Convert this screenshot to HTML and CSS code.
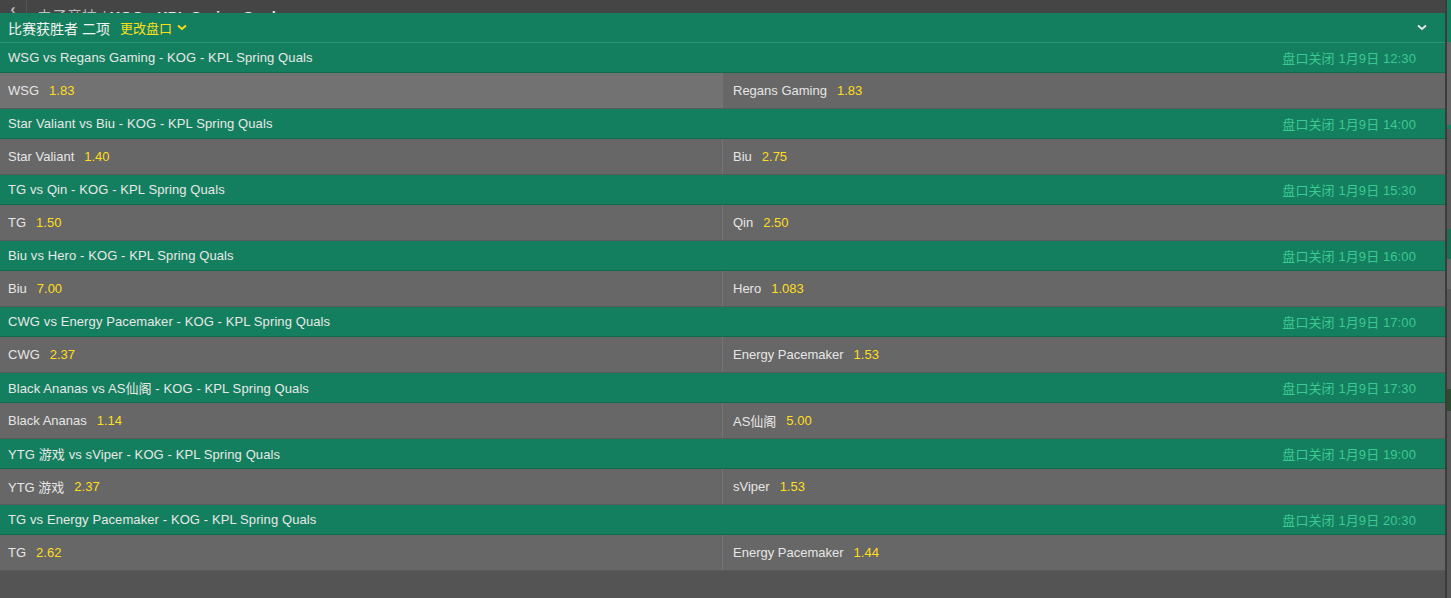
FILE: index.html
```html
<!DOCTYPE html>
<html lang="zh-CN">
<head>
    <meta charset="UTF-8">
    <title>KOG - KPL Spring Quals</title>
    <link rel="stylesheet" href="styles.css">
</head>
<body>
    <div class="page">
        <div class="main">
            <div class="crumb">
                <span class="back">&lsaquo;</span>
                <span class="crumb-text"><span class="crumb-dim">电子竞技 /</span> KOG - KPL Spring Quals</span>
            </div>

            <div class="market-head">
                <span class="market-title">比赛获胜者 二项</span>
                <span class="market-switch">更改盘口
                    <svg width="10" height="7" viewBox="0 0 10 7"><path d="M1 1.5 L5 5 L9 1.5" fill="none" stroke="#ffdf1b" stroke-width="1.8"/></svg>
                </span>
                <svg class="collapse" width="10" height="7" viewBox="0 0 10 7"><path d="M1 1.5 L5 5 L9 1.5" fill="none" stroke="#e8e8e8" stroke-width="1.8"/></svg>
            </div>

            <div class="fixture">
                <div class="fixture-head"><span>WSG vs Regans Gaming - KOG - KPL Spring Quals</span><span class="close">盘口关闭 1月9日 12:30</span></div>
                <div class="odds-row">
                    <div class="cell hover">WSG <span class="price">1.83</span></div>
                    <div class="cell">Regans Gaming <span class="price">1.83</span></div>
                </div>
            </div>

            <div class="fixture">
                <div class="fixture-head"><span>Star Valiant vs Biu - KOG - KPL Spring Quals</span><span class="close">盘口关闭 1月9日 14:00</span></div>
                <div class="odds-row">
                    <div class="cell">Star Valiant <span class="price">1.40</span></div>
                    <div class="cell">Biu <span class="price">2.75</span></div>
                </div>
            </div>

            <div class="fixture">
                <div class="fixture-head"><span>TG vs Qin - KOG - KPL Spring Quals</span><span class="close">盘口关闭 1月9日 15:30</span></div>
                <div class="odds-row">
                    <div class="cell">TG <span class="price">1.50</span></div>
                    <div class="cell">Qin <span class="price">2.50</span></div>
                </div>
            </div>

            <div class="fixture">
                <div class="fixture-head"><span>Biu vs Hero - KOG - KPL Spring Quals</span><span class="close">盘口关闭 1月9日 16:00</span></div>
                <div class="odds-row">
                    <div class="cell">Biu <span class="price">7.00</span></div>
                    <div class="cell">Hero <span class="price">1.083</span></div>
                </div>
            </div>

            <div class="fixture">
                <div class="fixture-head"><span>CWG vs Energy Pacemaker - KOG - KPL Spring Quals</span><span class="close">盘口关闭 1月9日 17:00</span></div>
                <div class="odds-row">
                    <div class="cell">CWG <span class="price">2.37</span></div>
                    <div class="cell">Energy Pacemaker <span class="price">1.53</span></div>
                </div>
            </div>

            <div class="fixture">
                <div class="fixture-head"><span>Black Ananas vs AS仙阁 - KOG - KPL Spring Quals</span><span class="close">盘口关闭 1月9日 17:30</span></div>
                <div class="odds-row">
                    <div class="cell">Black Ananas <span class="price">1.14</span></div>
                    <div class="cell">AS仙阁 <span class="price">5.00</span></div>
                </div>
            </div>

            <div class="fixture">
                <div class="fixture-head"><span>YTG 游戏 vs sViper - KOG - KPL Spring Quals</span><span class="close">盘口关闭 1月9日 19:00</span></div>
                <div class="odds-row">
                    <div class="cell">YTG 游戏 <span class="price">2.37</span></div>
                    <div class="cell">sViper <span class="price">1.53</span></div>
                </div>
            </div>

            <div class="fixture">
                <div class="fixture-head"><span>TG vs Energy Pacemaker - KOG - KPL Spring Quals</span><span class="close">盘口关闭 1月9日 20:30</span></div>
                <div class="odds-row">
                    <div class="cell">TG <span class="price">2.62</span></div>
                    <div class="cell">Energy Pacemaker <span class="price">1.44</span></div>
                </div>
            </div>
        </div>

        <div class="rail">
            <div class="rail-top"></div>
            <div class="rail-grey"></div>
            <div class="rail-line"></div>
            <div class="rail-dark"></div>
            <div class="rail-green"></div>
            <div class="rail-grey2"></div>
            <div class="rail-dark"></div>
            <div class="rail-moss"></div>
            <div class="rail-dark"></div>
        </div>
    </div>
</body>
</html>
```

FILE: styles.css
```css
* {
    margin: 0;
    padding: 0;
    box-sizing: border-box;
}

body {
    font-family: "Liberation Sans", Arial, "Noto Sans CJK SC", sans-serif;
    font-size: 13px;
    background: #545454;
    color: #e6e6e6;
    width: 1451px;
    height: 598px;
    overflow: hidden;
}

.page {
    display: flex;
    height: 598px;
}

.main {
    width: 1445px;
    flex-shrink: 0;
    background: #545454;
}

/* Top breadcrumb, scrolled mostly out of view */
.crumb {
    height: 13px;
    background: #454545;
    overflow: hidden;
    display: flex;
    align-items: flex-end;
    font-size: 15px;
    font-weight: bold;
    color: #e8e8e8;
}

.back {
    width: 27px;
    text-align: center;
    line-height: 24px;
    margin-bottom: -14px;
    border-right: 1px solid #555;
    height: 30px;
    color: #bbb;
}

.crumb-text {
    padding-left: 10px;
    line-height: 24px;
    margin-bottom: -16px;
}

.crumb-dim {
    font-weight: normal;
    color: #bdbdbd;
}

.market-head {
    height: 30px;
    background: #147f5e;
    border-bottom: 1px solid #2a9474;
    display: flex;
    align-items: center;
    padding: 0 8px;
    font-size: 14px;
    color: #f2f2f2;
}

.market-switch {
    margin-left: 10px;
    color: #ffdf1b;
    font-size: 13px;
    display: flex;
    align-items: center;
    gap: 5px;
}

.collapse {
    margin-left: auto;
    margin-right: 10px;
}

.fixture-head {
    height: 30px;
    background: #147f5e;
    border-bottom: 1px solid #0e6b4e;
    display: flex;
    align-items: center;
    justify-content: space-between;
    padding: 0 29px 0 8px;
    color: #e8e8e8;
    letter-spacing: 0.1px;
}

.close {
    color: #3cc894;
}

.odds-row {
    display: grid;
    grid-template-columns: 722px 1fr;
    height: 36px;
    background: #676767;
    border-bottom: 1px solid #5a5a5a;
}

.cell {
    display: flex;
    align-items: center;
    padding-left: 8px;
    color: #e6e6e6;
}

.cell + .cell {
    border-left: 1px solid #747474;
    padding-left: 10px;
}

.cell.hover {
    background: #727272;
}

.price {
    color: #ffdf1b;
    margin-left: 10px;
}

/* Right-hand side panel edge */
.rail {
    flex: 1;
    border-left: 2px solid #3c3c3c;
    display: flex;
    flex-direction: column;
    background: #585858;
}

.rail-top { height: 42px; background: #147f5e; }
.rail-grey { height: 83px; background: #666; }
.rail-line { height: 4px; background: #147f5e; }
.rail-dark { height: 100px; background: #585858; }
.rail-green { height: 30px; background: #1b6e52; }
.rail-grey2 { height: 30px; background: #666; }
.rail-moss { height: 22px; background: #2f4a2c; }
```
